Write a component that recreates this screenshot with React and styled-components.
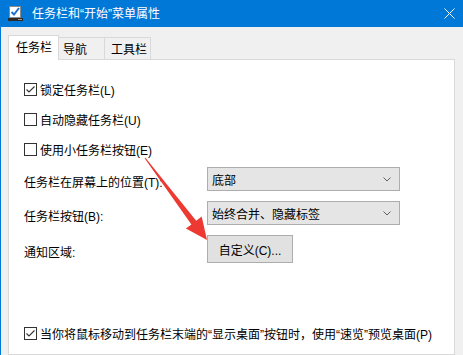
import styled, { createGlobalStyle } from "styled-components"

const GlobalStyle = createGlobalStyle`
  html, body {
    margin: 0;
    padding: 0;
    background: #f0f0f0;
  }
  body {
    font-family: "Liberation Sans", "Noto Sans CJK SC", sans-serif;
    font-size: 12px;
    color: #000;
  }
`

// Fenêtre principale
const Window = styled.div`
  position: relative;
  box-sizing: border-box;
  width: 463px;
  height: 355px;
  overflow: hidden;
  background: #f0f0f0;
  border-left: 1px solid #0078d7;
  display: flex;
  flex-direction: column;
`

const TitleBar = styled.div`
  height: 27px;
  flex: none;
  background: #0078d7;
  color: #fff;
  display: flex;
  align-items: center;
  padding-left: 7px;

  .title {
    margin-left: 8px;
    font-size: 12px;
    line-height: 1;
  }

  .close {
    margin-left: auto;
    margin-right: 8px;
    display: flex;
  }
`

const Body = styled.div`
  flex: 1;
  display: flex;
  flex-direction: column;
  padding: 8px 8px 0 7px;
`

const Tabs = styled.div`
  display: flex;
  align-items: flex-end;
  height: 25px;
  position: relative;
  z-index: 1;
  margin-bottom: -1px;
`

const Tab = styled.div`
  box-sizing: border-box;
  width: ${(p) => p.$width}px;
  height: ${(p) => (p.$active ? 25 : 23)}px;
  padding-left: ${(p) => p.$pad}px;
  padding-bottom: ${(p) => (p.$active ? 3 : 0)}px;
  display: flex;
  align-items: center;
  background: ${(p) => (p.$active ? "#fff" : "#f0f0f0")};
  border: 1px solid #d9d9d9;
  border-bottom: ${(p) => (p.$active ? "none" : "1px solid #d9d9d9")};
  border-left: ${(p) => (p.$first ? "1px solid #d9d9d9" : "none")};
  font-size: 12px;
`

const Panel = styled.div`
  flex: 1;
  box-sizing: border-box;
  width: 447px;
  background: #fff;
  border: 1px solid #d9d9d9;
  padding: 14px 0 0 15px;
  display: flex;
  flex-direction: column;
`

const CheckRow = styled.label`
  height: 30px;
  display: flex;
  align-items: center;
  gap: 3px;
  margin-top: ${(p) => p.$offset || 0}px;
`

const Box = styled.span`
  box-sizing: border-box;
  width: 13px;
  height: 13px;
  border: 1px solid #333;
  background: #fff;
  display: flex;
  margin-top: 1px;
`

const Form = styled.div`
  display: grid;
  grid-template-columns: 183px 193px;
  grid-template-rows: 24px 24px 28px;
  row-gap: 10px;
  margin-top: 3px;
  align-items: center;

  .label {
    padding-top: 5px;
  }
`

const Select = styled.div`
  box-sizing: border-box;
  height: 24px;
  background: #e5e5e5;
  border: 1px solid #adadad;
  display: flex;
  align-items: center;
  padding: 0 8px 0 4px;

  span {
    flex: 1;
  }
`

const Button = styled.div`
  box-sizing: border-box;
  width: 86px;
  height: 28px;
  background: #e1e1e1;
  border: 1px solid #adadad;
  display: flex;
  align-items: center;
  justify-content: center;
`

const Overlay = styled.svg`
  position: absolute;
  left: -1px;
  top: 0;
  pointer-events: none;
`

function CheckBox({ checked }) {
  return (
    <Box>
      {checked && (
        <svg width="11" height="11" viewBox="0 0 11 11">
          <polyline points="1.5,5.5 4,8 9.5,2.5" fill="none" stroke="#333" strokeWidth="1.1" />
        </svg>
      )}
    </Box>
  )
}

function Chevron() {
  return (
    <svg width="8" height="5" viewBox="0 0 8 5">
      <polyline points="0.5,0.5 4,4 7.5,0.5" fill="none" stroke="#606060" strokeWidth="1" />
    </svg>
  )
}

function App() {
  return (
    <>
      <GlobalStyle />
      <Window>
        <TitleBar>
          {/* Icône de la fenêtre */}
          <svg width="16" height="17" viewBox="0 0 16 17">
            <rect x="1.5" y="1.5" width="11" height="11" fill="#fff" stroke="#8a8a8a" />
            <polyline points="3.5,7 6,9.5 11,3" fill="none" stroke="#1e6fd0" strokeWidth="2" />
            <rect x="0" y="13" width="15" height="3" fill="#2b2b2b" />
            <rect x="10" y="14" width="4" height="1" fill="#9a9a9a" />
          </svg>
          <span className="title">任务栏和“开始”菜单属性</span>
          <span className="close">
            <svg width="11" height="11" viewBox="0 0 11 11">
              <path d="M0.5 0.5 L10.5 10.5 M10.5 0.5 L0.5 10.5" stroke="#fff" strokeWidth="1" />
            </svg>
          </span>
        </TitleBar>
        <Body>
          <Tabs>
            <Tab $active $first $width={51} $pad={7}>任务栏</Tab>
            <Tab $width={46} $pad={4}>导航</Tab>
            <Tab $width={46} $pad={6}>工具栏</Tab>
          </Tabs>
          <Panel>
            <CheckRow>
              <CheckBox checked />
              锁定任务栏(L)
            </CheckRow>
            <CheckRow>
              <CheckBox />
              自动隐藏任务栏(U)
            </CheckRow>
            <CheckRow>
              <CheckBox />
              使用小任务栏按钮(E)
            </CheckRow>
            <Form>
              <span className="label">任务栏在屏幕上的位置(T):</span>
              <Select>
                <span>底部</span>
                <Chevron />
              </Select>
              <span className="label">任务栏按钮(B):</span>
              <Select>
                <span>始终合并、隐藏标签</span>
                <Chevron />
              </Select>
              <span className="label">通知区域:</span>
              <Button>自定义(C)...</Button>
            </Form>
            <CheckRow $offset={55}>
              <CheckBox checked />
              当你将鼠标移动到任务栏末端的“显示桌面”按钮时，使用“速览”预览桌面(P)
            </CheckRow>
          </Panel>
        </Body>
        {/* Flèche rouge d'annotation */}
        <Overlay width="463" height="355" viewBox="0 0 463 355">
          <polygon
            points="145.4,157.7 196.2,220.8 201.7,216.6 207,240 185.9,228.6 191.4,224.4 144.6,158.3"
            fill="#ec3a33"
          />
        </Overlay>
      </Window>
    </>
  )
}

export default App
